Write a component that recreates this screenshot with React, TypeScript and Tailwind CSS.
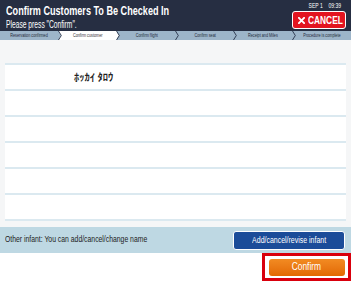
import React from "react";

const steps = [
  "Reservation confirmed",
  "Confirm customer",
  "Confirm flight",
  "Confirm seat",
  "Receipt and Miles",
  "Procedure is complete",
];

export default function App() {
  return (
    <div className="w-[351px] h-[281px] overflow-hidden bg-white flex flex-col font-['Liberation_Sans',Arial,sans-serif]">
      {/* Header */}
      <div className="h-[31px] bg-[#262e42] flex justify-between pl-[6px] pr-[5px]">
        <div className="flex flex-col pt-[3px] w-[200px]">
          <div className="text-white font-bold text-[13px] leading-[15px] whitespace-nowrap">
            <span className="inline-block origin-left scale-x-[0.7]">Confirm Customers To Be Checked In</span>
          </div>
          <div className="text-white text-[10px] leading-[11px] mt-[1px] whitespace-nowrap">
            <span className="inline-block origin-left scale-x-[0.67]">Please press "Confirm".</span>
          </div>
        </div>
        <div className="flex flex-col items-end">
          <div className="text-white text-[7px] leading-[8px] mt-[2px] pr-[5px] whitespace-nowrap">
            <span className="inline-block origin-right scale-x-[0.72]">SEP 1&nbsp;&nbsp;&nbsp;&nbsp;09:39</span>
          </div>
          <div className="mt-[1px] h-[18px] w-[54px] rounded-[3px] border border-white bg-[#e3141f] flex items-center pl-[5px] gap-[3px] text-white font-bold text-[11px]">
            <svg width="7" height="7" viewBox="0 0 8 8" className="shrink-0">
              <path d="M1 1L7 7M7 1L1 7" stroke="white" strokeWidth="2.2" strokeLinecap="square" />
            </svg>
            <span className="w-[36px] whitespace-nowrap leading-none">
              <span className="inline-block origin-left scale-x-[0.76]">CANCEL</span>
            </span>
          </div>
        </div>
      </div>

      {/* Breadcrumb */}
      <div className="h-[9px] bg-[#9db5c9] flex">
        {steps.map((s, i) => {
          const active = i === 1;
          return (
            <div
              key={s}
              className={`relative flex-1 flex items-center justify-center text-[5px] leading-none whitespace-nowrap ${
                active ? "bg-white text-[#333]" : "bg-[#9db5c9] text-[#1f2a3a]"
              }`}
            >
              <span className="relative z-20 inline-block scale-x-[0.75]">{s}</span>
              {i < steps.length - 1 && (
                <svg
                  className="absolute right-[-3px] top-0 z-10"
                  width="4"
                  height="9"
                  viewBox="0 0 4 9"
                >
                  <polygon points="0,0 3,4.5 0,9" fill={active ? "#ffffff" : "#9db5c9"} />
                  <polyline points="0.5,0 3.3,4.5 0.5,9" fill="none" stroke="#28324a" strokeWidth="0.9" />
                </svg>
              )}
            </div>
          );
        })}
      </div>

      {/* Content */}
      <div className="h-[187px] bg-[#f5f6f7] pt-[23px] px-[5px]">
        <div className="border-t-2 border-[#dbe9f0]">
          {[0, 1, 2, 3, 4, 5].map((r) => (
            <div key={r} className="h-[26px] bg-white border-b-2 border-[#dbe9f0] flex items-center">
              {r === 0 && (
                <span className="ml-[69px] text-[10.5px] font-bold text-[#222] font-['Noto_Sans_CJK_JP',sans-serif]">
                  ﾎｯｶｲ ﾀﾛｳ
                </span>
              )}
            </div>
          ))}
        </div>
      </div>

      {/* Info bar */}
      <div className="h-[26px] bg-[#bed8e3] flex items-center justify-between pl-[5px] pr-[6px]">
        <span className="text-[9px] text-[#222] whitespace-nowrap">
          <span className="inline-block origin-left scale-x-[0.76]">Other infant: You can add/cancel/change name</span>
        </span>
        <div className="w-[112px] h-[19px] rounded-[3px] border border-white bg-[#1b4c99] flex items-center justify-center text-white text-[8.5px] whitespace-nowrap">
          <span className="inline-block scale-x-[0.82]">Add/cancel/revise infant</span>
        </div>
      </div>

      {/* Bottom */}
      <div className="flex-1 flex justify-end">
        <div className="w-[89px] h-[28px] border-[3px] border-[#d9000d] flex items-center justify-center">
          <div className="w-[76px] h-[17px] rounded-[3px] bg-gradient-to-b from-[#f28b22] to-[#e26800] flex items-center justify-center text-white text-[10.5px]">
            <span className="inline-block scale-x-[0.8]">Confirm</span>
          </div>
        </div>
      </div>
    </div>
  );
}
